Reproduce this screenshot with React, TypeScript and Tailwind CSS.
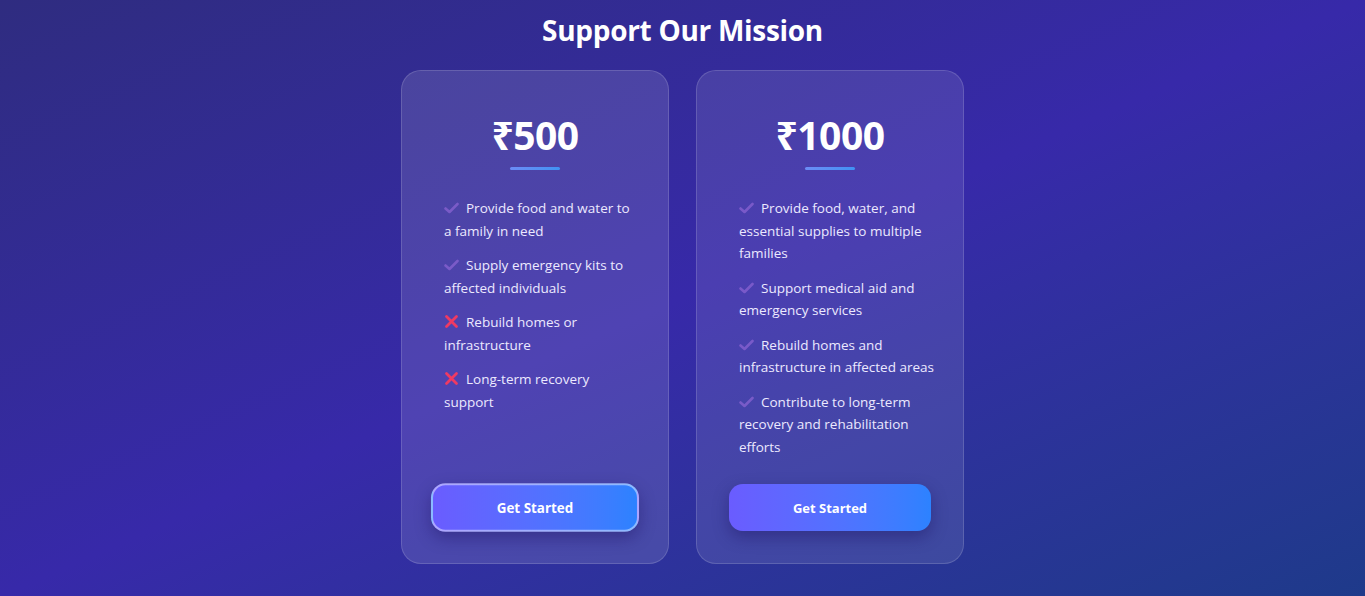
const plans = [
    {
        price: "₹500",
        hovered: true,
        items: [
            { ok: true, text: "Provide food and water to a\u00A0family in need" },
            { ok: true, text: "Supply emergency kits to affected individuals" },
            { ok: false, text: "Rebuild homes or infrastructure" },
            { ok: false, text: "Long-term recovery support" },
        ],
    },
    {
        price: "₹1000",
        hovered: false,
        items: [
            { ok: true, text: "Provide food, water, and essential supplies to multiple families" },
            { ok: true, text: "Support medical aid and emergency services" },
            { ok: true, text: "Rebuild homes and infrastructure in affected areas" },
            { ok: true, text: "Contribute to long-term recovery and rehabilitation efforts" },
        ],
    },
];

const Check = () => (
    <svg width="15" height="12" viewBox="0 0 15 12" className="inline-block mr-[7px] -mt-[2px] align-middle">
        <path d="M1.5 6.5 L5.5 10 L13.5 2" fill="none" stroke="#8a63d2" strokeOpacity="0.75" strokeWidth="2.6" strokeLinecap="round" strokeLinejoin="round" />
    </svg>
);

const Cross = () => (
    <svg width="15" height="15" viewBox="0 0 15 15" className="inline-block mr-[7px] -mt-[3px] align-middle">
        <path d="M2.5 2.5 L12.5 12.5 M12.5 2.5 L2.5 12.5" fill="none" stroke="#ef3a62" strokeWidth="2.8" strokeLinecap="round" />
    </svg>
);

export default function App() {
    return (
        <div
            className="min-h-[596px] w-full bg-gradient-to-br from-[#2f2c80] via-[#3729a9] to-[#1e3a8a] flex flex-col items-center"
            style={{ fontFamily: '"Open Sans", "Noto Sans", sans-serif' }}
        >
            <h1 className="text-[28px] font-bold text-white leading-[40px] mt-[10px] mb-[20px] tracking-[-0.3px]">Support Our Mission</h1>
            <div className="flex gap-[27px] items-stretch">
                {plans.map((plan) => (
                    <div
                        key={plan.price}
                        className={
                            plan.hovered
                                ? "w-[268px] h-[494px] rounded-[20px] border border-white/15 bg-white/[0.12] px-8 pt-[40px] pb-[32px] flex flex-col"
                                : "w-[268px] h-[494px] rounded-[20px] border border-white/15 bg-white/10 px-8 pt-[40px] pb-[32px] flex flex-col"
                        }
                    >
                        <div className="text-center text-white font-bold text-[39px] leading-[48px] tracking-[-0.5px]">{plan.price}</div>
                        <div className="mx-auto mt-[8px] w-[50px] h-[3px] rounded-full bg-gradient-to-r from-[#6b8cf5] to-[#3f92f4]" />
                        <ul className="mt-[27px] pl-[10px] -mr-[5px] flex flex-col gap-[12px]">
                            {plan.items.map((it) => (
                                <li key={it.text} className="text-[13.5px] leading-[22.5px] text-[#ece9ff]">
                                    {it.ok ? <Check /> : <Cross />}
                                    {it.text}
                                </li>
                            ))}
                        </ul>
                        <button
                            className={
                                plan.hovered
                                    ? "mt-auto h-[47px] pt-[2px] scale-[1.03] rounded-[14px] border-2 border-white/45 bg-gradient-to-r from-[#6a5cff] to-[#2c82ff] text-white font-bold text-[13px] shadow-[0_6px_16px_rgba(20,10,80,0.35)]"
                                    : "mt-auto h-[47px] pt-[2px] rounded-[14px] bg-gradient-to-r from-[#6a5cff] to-[#2c82ff] text-white font-bold text-[13px] shadow-[0_6px_16px_rgba(20,10,80,0.35)]"
                            }
                        >
                            Get Started
                        </button>
                    </div>
                ))}
            </div>
        </div>
    );
}
